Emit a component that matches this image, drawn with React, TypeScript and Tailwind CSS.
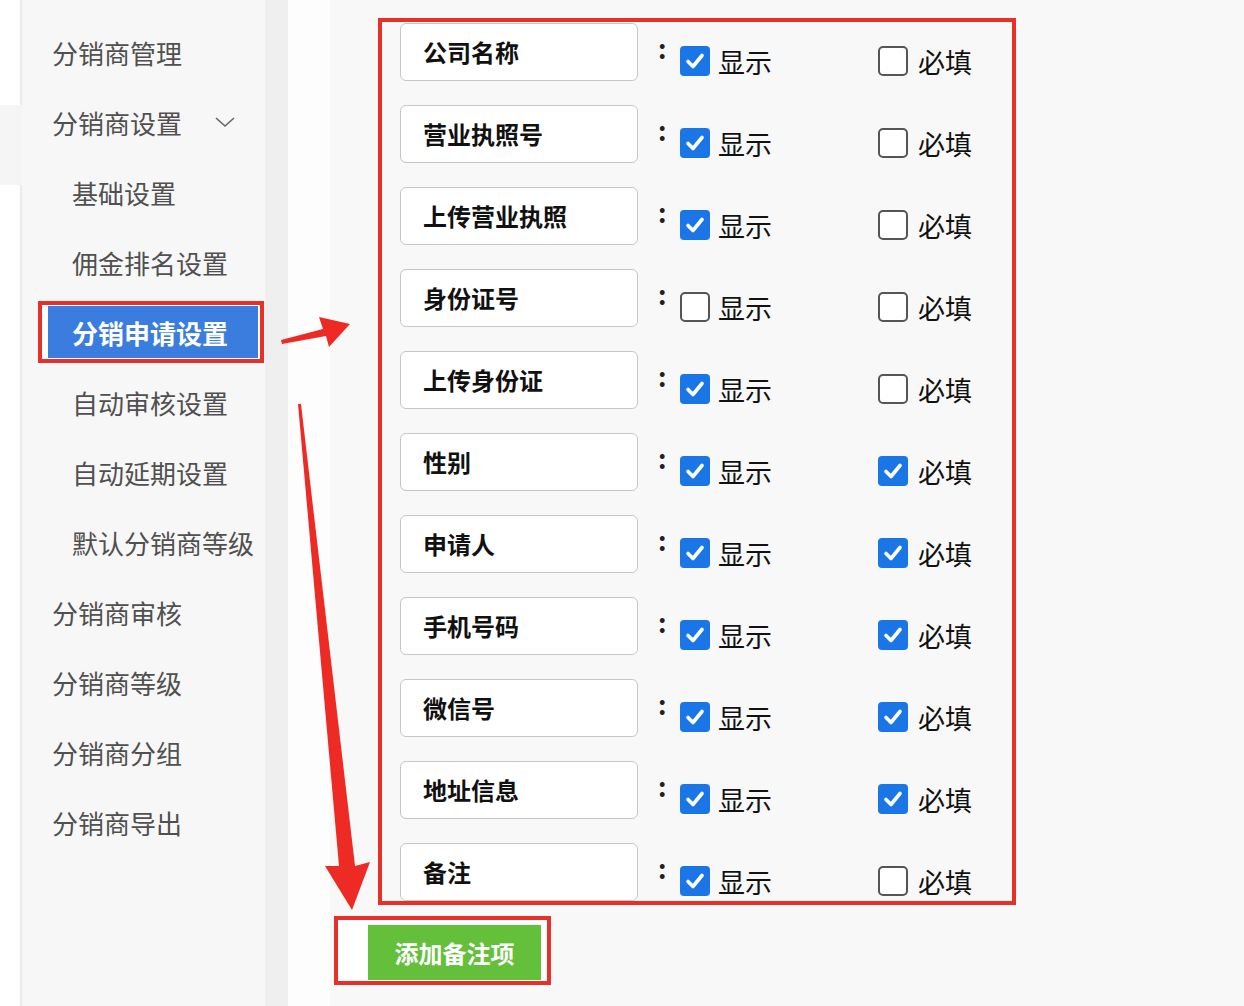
import React from 'react';

interface FieldRow {
  label: string;
  show: boolean;
  required: boolean;
}

const menuItems = [
  { label: '分销商管理', level: 0 },
  { label: '分销商设置', level: 0, open: true },
  { label: '基础设置', level: 1 },
  { label: '佣金排名设置', level: 1 },
  { label: '分销申请设置', level: 1, active: true },
  { label: '自动审核设置', level: 1 },
  { label: '自动延期设置', level: 1 },
  { label: '默认分销商等级', level: 1 },
  { label: '分销商审核', level: 0 },
  { label: '分销商等级', level: 0 },
  { label: '分销商分组', level: 0 },
  { label: '分销商导出', level: 0 },
];

const fields: FieldRow[] = [
  { label: '公司名称', show: true, required: false },
  { label: '营业执照号', show: true, required: false },
  { label: '上传营业执照', show: true, required: false },
  { label: '身份证号', show: false, required: false },
  { label: '上传身份证', show: true, required: false },
  { label: '性别', show: true, required: true },
  { label: '申请人', show: true, required: true },
  { label: '手机号码', show: true, required: true },
  { label: '微信号', show: true, required: true },
  { label: '地址信息', show: true, required: true },
  { label: '备注', show: true, required: false },
];

const font = { fontFamily: '"Microsoft YaHei", "Noto Sans CJK SC", "Noto Sans", sans-serif' };

function Checkbox({ checked }: { checked: boolean }) {
  if (!checked) {
    return <span className="block w-[30px] h-[30px] rounded-[5px] border-2 border-[#555] bg-white" />;
  }
  return (
    <span className="flex items-center justify-center w-[30px] h-[30px] rounded-[4px] bg-[#1a76e6]">
      <svg width="22" height="22" viewBox="0 0 22 22">
        <polyline points="4,11.5 9,16.5 18,5.5" fill="none" stroke="#fff" strokeWidth="3.6" strokeLinecap="round" strokeLinejoin="round" />
      </svg>
    </span>
  );
}

function Arrows() {
  return (
    <svg className="absolute left-0 top-0 pointer-events-none" width="1244" height="1006" viewBox="0 0 1244 1006">
      {/* short arrow pointing at the form */}
      <polygon points="281,340 323,329 319,317 350,324 329,347 326,336 282,344" fill="#ee2a24" />
      {/* long arrow pointing at the button */}
      <polygon points="298,404 301,404 355,866 370,862 352,910 325,866 339,866" fill="#ee2a24" />
    </svg>
  );
}

export default function App() {
  return (
    <div className="relative flex w-[1244px] h-[1006px] overflow-hidden bg-[#f8f8f8]" style={font}>
      {/* left edge */}
      <div className="flex flex-col w-[22px] shrink-0">
        <div className="h-[105px] bg-white border-r-2 border-[#ececec]" />
        <div className="h-[80px] bg-[#f5f5f5]" />
        <div className="flex-1 bg-white border-r-2 border-[#ececec]" />
      </div>

      {/* sidebar */}
      <div className="w-[243px] shrink-0 bg-[#f7f7f7] pt-[17px]">
        {menuItems.map(item =>
          item.active ? (
            <div key={item.label} className="h-[70px] flex items-center">
              <div className="ml-[16px] w-[226px] h-[62px] border-4 border-[#e8302a] bg-white pl-[6px] pr-[2px] py-[1px]">
                <div className="h-full bg-[#3a7ddf] flex items-center pl-[24px] text-[26px] text-white font-bold">
                  {item.label}
                </div>
              </div>
            </div>
          ) : (
            <div
              key={item.label}
              className={`h-[70px] flex items-center text-[26px] text-[#505050] ${item.level === 1 ? 'pl-[50px]' : 'pl-[30px]'}`}
            >
              <span>{item.label}</span>
              {item.open && (
                <svg className="ml-[32px]" width="22" height="14" viewBox="0 0 22 14">
                  <polyline points="2,3 11,11 20,3" fill="none" stroke="#666" strokeWidth="1.6" />
                </svg>
              )}
            </div>
          )
        )}
      </div>

      <div className="w-[23px] shrink-0 bg-[#efefef]" />
      <div className="w-[42px] shrink-0 bg-[#fdfdfd]" />

      {/* main */}
      <div className="flex-1 pl-[4px] pt-[18px]">
        <div className="ml-[44px] w-[638px] h-[887px] border-4 border-[#e8302a] overflow-hidden">
          <div className="pl-[18px] mt-[1px]">
            {fields.map(f => (
              <div key={f.label} className="h-[82px] flex items-start">
                <div className="w-[238px] h-[58px] shrink-0 rounded-md border border-[#c6c6c6] bg-white flex items-center pl-[22px] text-[24px] font-bold text-[#111]">
                  {f.label}
                </div>
                <span className="ml-[20px] mt-[17px] w-[22px] text-[26px] font-bold text-[#222] leading-[0.6]">:</span>
                <div className="mt-[23px] flex items-center w-[198px]">
                  <Checkbox checked={f.show} />
                  <span className="ml-[8px] text-[27px] leading-none text-[#111]">显示</span>
                </div>
                <div className="mt-[23px] flex items-center">
                  <Checkbox checked={f.required} />
                  <span className="ml-[10px] text-[27px] leading-none text-[#111]">必填</span>
                </div>
              </div>
            ))}
          </div>
        </div>

        <div className="mt-[11px] w-[217px] h-[69px] border-4 border-[#e8302a] bg-white pl-[30px] pr-[6px] pt-[5px] pb-[1px]">
          <button className="w-full h-full bg-[#64bf3b] text-white text-[24px] font-bold">
            添加备注项
          </button>
        </div>
      </div>

      <Arrows />
    </div>
  );
}
